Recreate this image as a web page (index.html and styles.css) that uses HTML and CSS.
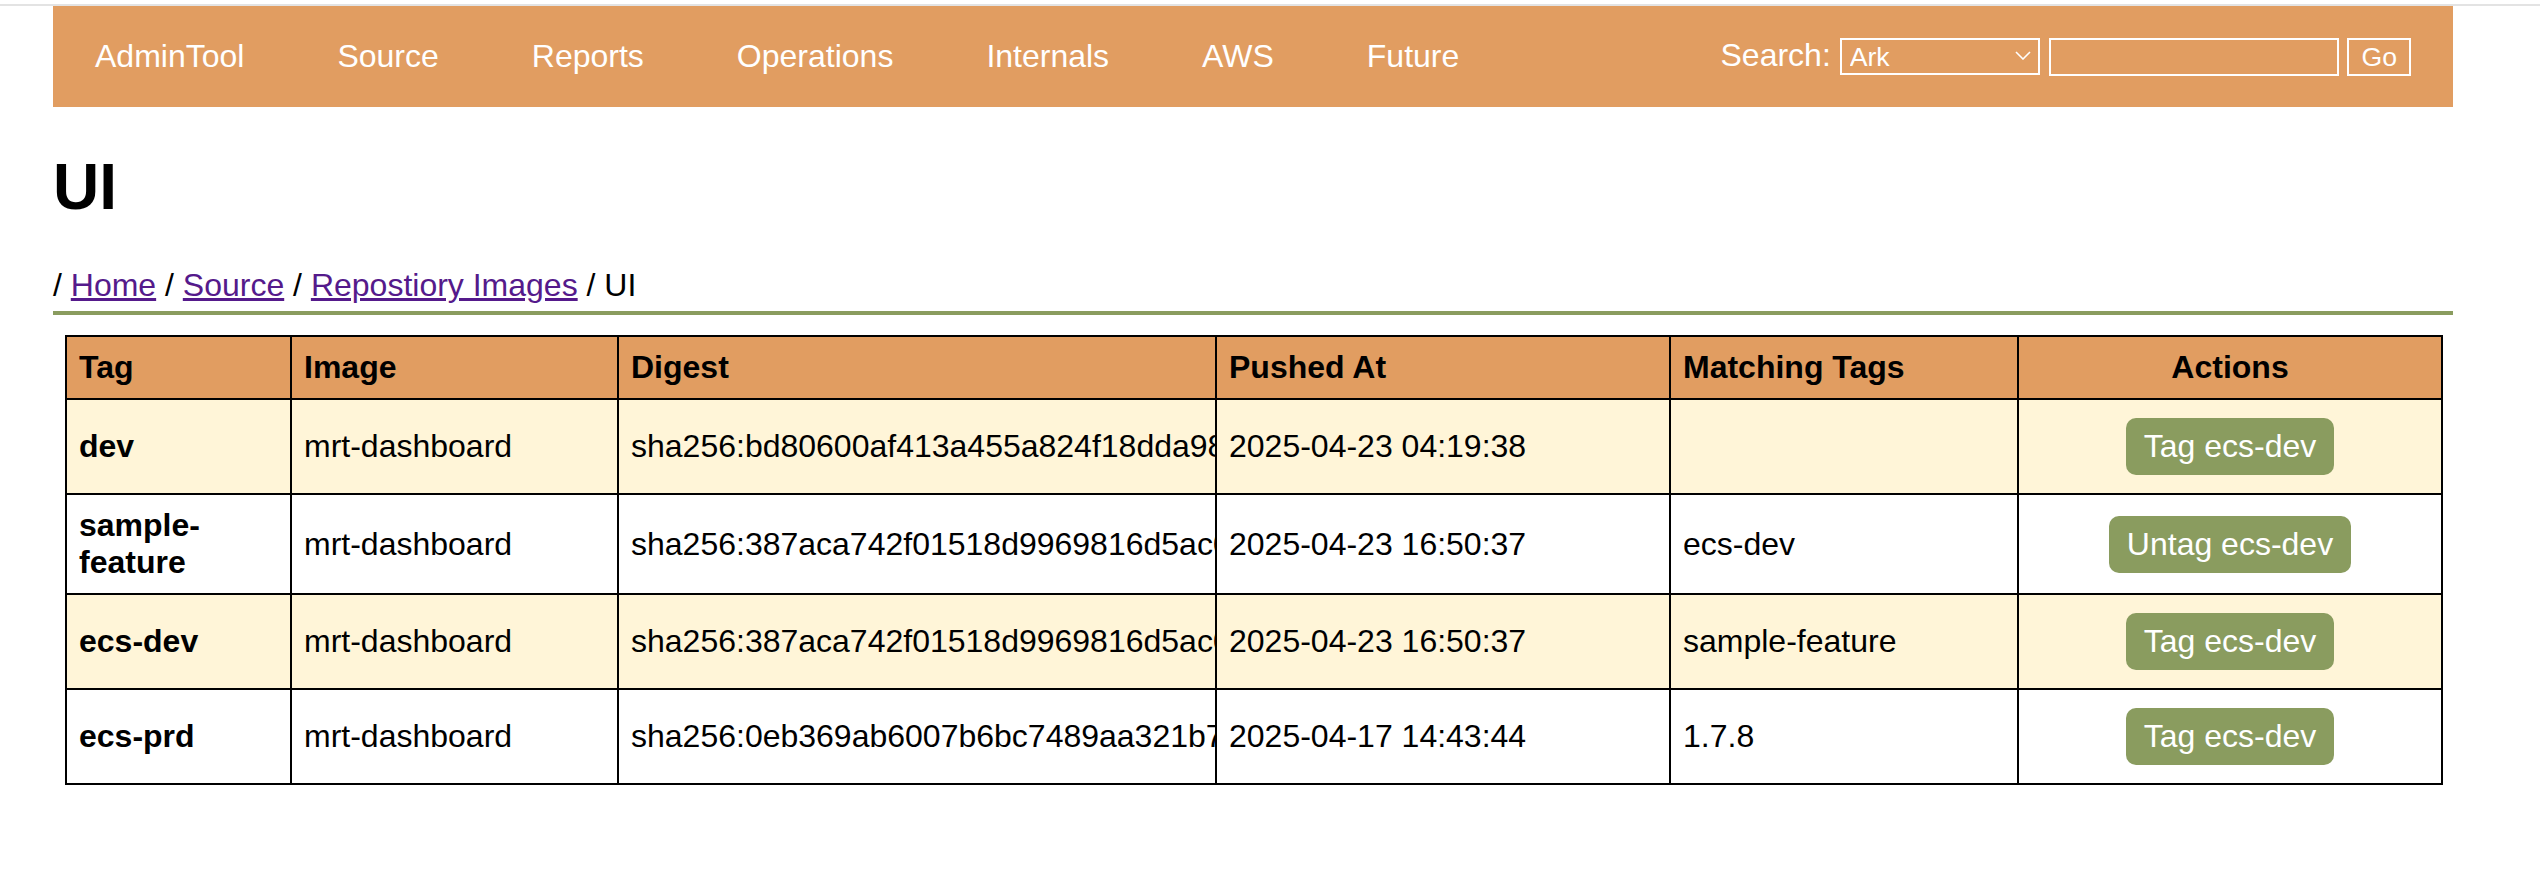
FILE: index.html
```html
<!DOCTYPE html>
<html lang="en">
<head>
<meta charset="utf-8">
<title>UI - AdminTool</title>
<link rel="stylesheet" href="styles.css">
</head>
<body>
<header class="topbar">
  <nav class="nav">
    <div class="nav-links">
      <a href="#">AdminTool</a>
      <a href="#">Source</a>
      <a href="#">Reports</a>
      <a href="#">Operations</a>
      <a href="#">Internals</a>
      <a href="#">AWS</a>
      <a href="#">Future</a>
    </div>
    <form class="search">
      <label>Search:</label> <span class="select-wrap"><select class="search-select"><option>Ark</option></select><svg class="chevron" width="16" height="9" viewBox="0 0 16 9"><path d="M1 1 L8 8 L15 1" fill="none" stroke="#fff" stroke-width="1.6"/></svg></span> <input class="search-input" type="text"> <button class="search-go" type="button">Go</button>
    </form>
  </nav>
</header>
<main class="content">
  <h1 class="title">UI</h1>
  <div class="crumbs">/ <a href="#">Home</a> / <a href="#">Source</a> / <a href="#">Repostiory Images</a> / UI</div>
  <table class="images">
    <colgroup>
      <col class="c-tag"><col class="c-image"><col class="c-digest"><col class="c-pushed"><col class="c-match"><col class="c-actions">
    </colgroup>
    <thead>
      <tr><th>Tag</th><th>Image</th><th>Digest</th><th>Pushed At</th><th>Matching Tags</th><th class="center">Actions</th></tr>
    </thead>
    <tbody>
      <tr class="alt">
        <td class="tag">dev</td><td>mrt-dashboard</td><td class="digest">sha256:bd80600af413a455a824f18dda98e2c41b0f7a3d6e</td><td>2025-04-23 04:19:38</td><td></td><td class="center"><button class="btn" type="button">Tag ecs-dev</button></td>
      </tr>
      <tr>
        <td class="tag">sample-feature</td><td>mrt-dashboard</td><td class="digest">sha256:387aca742f01518d9969816d5ac0e4b21f97c3a85d</td><td>2025-04-23 16:50:37</td><td>ecs-dev</td><td class="center"><button class="btn" type="button">Untag ecs-dev</button></td>
      </tr>
      <tr class="alt">
        <td class="tag">ecs-dev</td><td>mrt-dashboard</td><td class="digest">sha256:387aca742f01518d9969816d5ac0e4b21f97c3a85d</td><td>2025-04-23 16:50:37</td><td>sample-feature</td><td class="center"><button class="btn" type="button">Tag ecs-dev</button></td>
      </tr>
      <tr>
        <td class="tag">ecs-prd</td><td>mrt-dashboard</td><td class="digest">sha256:0eb369ab6007b6bc7489aa321b7c5e02d8f4a19e6b</td><td>2025-04-17 14:43:44</td><td>1.7.8</td><td class="center"><button class="btn" type="button">Tag ecs-dev</button></td>
      </tr>
    </tbody>
  </table>
</main>
</body>
</html>
```

FILE: styles.css
```css
html, body {
  margin: 0;
  padding: 0;
  background: #ffffff;
}

body {
  font-family: "Liberation Sans", Arial, Helvetica, sans-serif;
  font-size: 32px;
  color: #000000;
}

.topbar {
  margin-top: 4px;
  border-top: 2px solid #e3e3e3;
}

.nav {
  margin-left: 53px;
  width: 2400px;
  height: 101px;
  box-sizing: border-box;
  padding: 0 42px;
  background: #e19d61;
  display: flex;
  align-items: center;
  justify-content: space-between;
}

.nav-links {
  display: flex;
  gap: 93px;
}

.nav-links a {
  color: #ffffff;
  text-decoration: none;
  font-size: 32px;
}

.search {
  margin: 0;
  color: #ffffff;
  font-size: 32px;
  white-space: nowrap;
}

.select-wrap {
  position: relative;
  display: inline-block;
  vertical-align: baseline;
}

.search-select {
  -webkit-appearance: none;
  appearance: none;
  width: 200px;
  height: 37px;
  box-sizing: border-box;
  border: 2px solid #ffffff;
  border-radius: 0;
  background: transparent;
  color: #ffffff;
  font-family: "Liberation Sans", Arial, sans-serif;
  font-size: 26.67px;
  padding: 0 30px 0 8px;
  margin: 0;
  vertical-align: baseline;
}

.chevron {
  position: absolute;
  right: 9px;
  top: 14px;
  pointer-events: none;
}

.search-input {
  width: 290px;
  height: 38px;
  box-sizing: border-box;
  border: 2px solid #ffffff;
  border-radius: 0;
  background: transparent;
  color: #ffffff;
  font-size: 26.67px;
  padding: 0 6px;
  margin: 0;
  vertical-align: baseline;
}

.search-go {
  height: 38px;
  box-sizing: border-box;
  border: 2px solid #ffffff;
  border-radius: 0;
  background: transparent;
  color: #ffffff;
  font-family: "Liberation Sans", Arial, sans-serif;
  font-size: 26.67px;
  padding: 0 12px;
  margin: 0;
  vertical-align: baseline;
}

.content {
  margin-left: 53px;
  width: 2400px;
}

.title {
  font-size: 64px;
  font-weight: bold;
  margin: 43px 0 43px;
  line-height: normal;
}

.crumbs {
  padding-bottom: 7px;
  border-bottom: 4px solid #8a9c5f;
}

.crumbs a {
  color: #551a8b;
  text-decoration: underline;
}

.images {
  margin: 20px 12px 0;
  width: 2376px;
  border-collapse: collapse;
  table-layout: fixed;
}

.c-tag { width: 225px; }
.c-image { width: 327px; }
.c-digest { width: 598px; }
.c-pushed { width: 454px; }
.c-match { width: 348px; }
.c-actions { width: 424px; }

.images th,
.images td {
  border: 2px solid #000000;
  padding: 12px;
  text-align: left;
  vertical-align: middle;
  line-height: normal;
}

.images thead th {
  background: #e19d61;
  font-weight: bold;
}

.images .center {
  text-align: center;
}

.images tr.alt td {
  background: #fff5d8;
}

.images td.tag {
  font-weight: bold;
}

.images td.digest {
  white-space: nowrap;
  overflow: hidden;
  padding-right: 0;
}

.btn {
  background: #8a9c5f;
  color: #ffffff;
  border: none;
  border-radius: 10px;
  padding: 10px 18px;
  margin: 6px 0;
  font-family: "Liberation Sans", Arial, sans-serif;
  font-size: 32px;
  line-height: normal;
}
```
